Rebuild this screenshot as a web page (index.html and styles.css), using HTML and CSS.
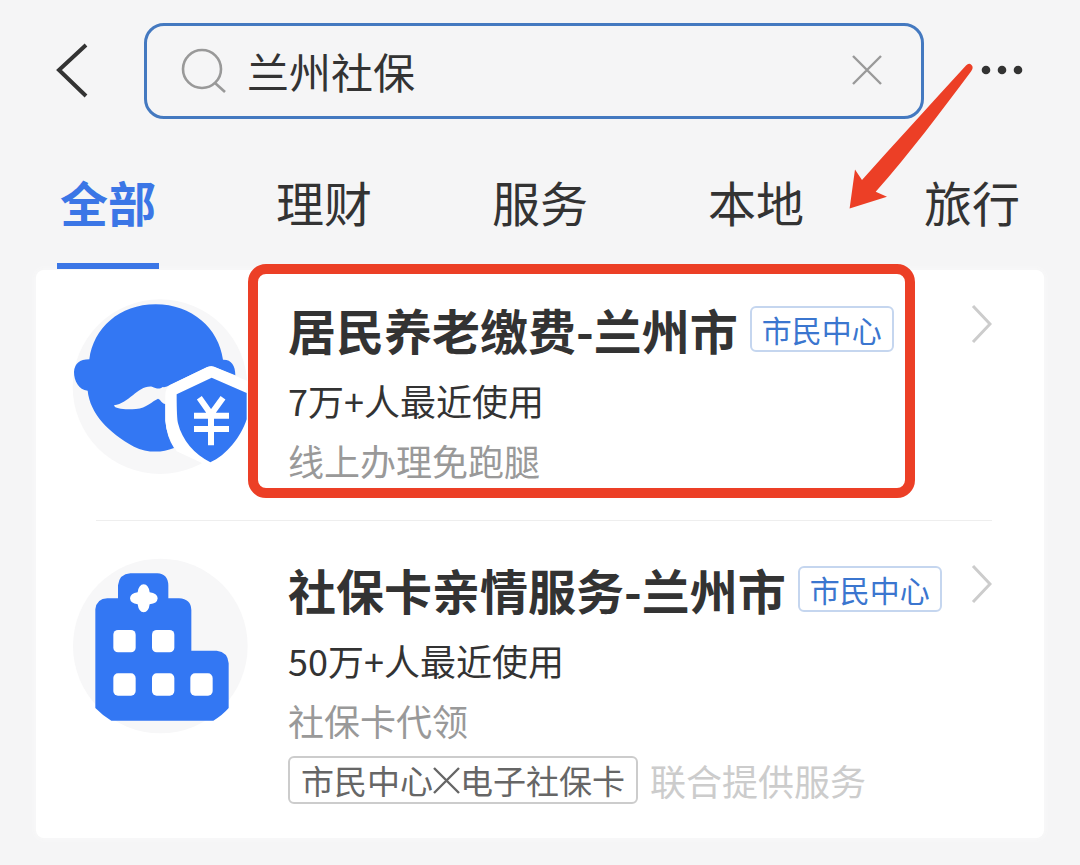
FILE: index.html
```html
<!DOCTYPE html>
<html lang="zh-CN">
<head>
<meta charset="utf-8">
<meta name="viewport" content="width=device-width, initial-scale=1">
<title>兰州社保</title>
<link rel="stylesheet" href="styles.css">
</head>
<body>
<header class="topbar">
  <button class="icon-btn back" type="button" aria-label="返回">
    <svg width="36" height="56" viewBox="0 0 36 56"><path d="M34 2 7 27 34 53" fill="none" stroke="#333" stroke-width="4"/></svg>
  </button>
  <form class="search" role="search">
    <svg class="search-icon" width="46" height="46" viewBox="0 0 46 46"><g fill="none" stroke="#999" stroke-width="2.6"><circle cx="21" cy="21" r="19"/><path d="M34 35l10 9"/></g></svg>
    <input class="search-input" type="text" value="兰州社保" aria-label="搜索">
    <button class="icon-btn" type="button" aria-label="清除">
      <svg width="32" height="32" viewBox="0 0 32 32"><path d="M2 1 30 29M30 1 2 29" stroke="#999" stroke-width="2.4"/></svg>
    </button>
  </form>
  <button class="icon-btn more" type="button" aria-label="更多">
    <svg width="44" height="12" viewBox="0 0 44 12"><g fill="#333"><circle cx="6" cy="5" r="4.3"/><circle cx="22" cy="5" r="4.3"/><circle cx="38" cy="5" r="4.3"/></g></svg>
  </button>
</header>

<nav class="tabs">
  <a class="tab tab-active" href="#all" aria-current="page">全部</a>
  <a class="tab" href="#finance">理财</a>
  <a class="tab" href="#service">服务</a>
  <a class="tab" href="#local">本地</a>
  <a class="tab" href="#travel">旅行</a>
</nav>

<main class="card">
  <a class="result" href="#pension">
    <svg class="logo" viewBox="126 114 528 528" aria-hidden="true">
      <circle cx="390" cy="380" r="262" fill="#f7f7f8"/>
      <path fill="#3377f3" d="M178 298C190 205 268 133 377 133S566 205 579 299C604 298 616 316 616 346L552 320Q543 317 532 321L420 375Q408 383 398 381C388 388 380 386 366 380C322 376 300 430 252 436C254 448 288 449 318 447C350 444 366 424 384 416C392 418 394 430 406 432V482Q410 530 432 564C392 580 350 578 312 560C235 518 180 460 173 392C146 390 132 362 132 336Q134 298 178 298Z"/>
      <path fill="#fff" d="M532 321 420 375Q406 384 406 405V482Q410 530 440 574L540 620 542 607 440 480V403L545 353 648 398 654 364 552 320Q543 317 532 321Z"/>
      <path fill="#3377f3" d="M545 353 650 399V478C634 530 588 587 541 607C494 584 456 540 444 490Q440 475 440 403Z"/>
      <path fill="none" stroke="#fff" stroke-width="18" d="M508 413 543 463 579 413M543 460V556M492 467H597M492 507H597"/>
    </svg>
    <div class="info">
      <div class="title-line"><h2 class="title">居民养老缴费-兰州市</h2><span class="badge">市民中心</span></div>
      <p class="usage">7万+人最近使用</p>
      <p class="desc">线上办理免跑腿</p>
      <span class="highlight"></span>
    </div>
    <svg class="chevron" width="22" height="40" viewBox="0 0 22 40"><path d="M3 2 20 20 3 38" fill="none" stroke="#ccc" stroke-width="3"/></svg>
  </a>
  <hr class="divider">
  <a class="result result-last" href="#family">
    <svg class="logo" viewBox="126 144 528 528" aria-hidden="true">
      <circle cx="391" cy="408" r="262" fill="#f7f7f8"/>
      <path fill="#3377f3" d="M301 190H382Q414 192 415 226V265H447Q483 267 484 300V422H560Q594 426 596 460V594Q578 615 550 632H244Q216 615 196 594V298Q200 266 232 265H264V226Q268 192 301 190Z"/>
      <g fill="#fff">
        <path d="M341 223Q356 224 359 247Q382 250 383 265Q382 281 359 283Q356 306 341 307Q326 306 323 283Q301 280 300 265Q301 250 323 247Q326 224 341 223Z"/>
        <rect x="250" y="360" width="67" height="67" rx="14"/>
        <rect x="366" y="360" width="67" height="67" rx="14"/>
        <rect x="250" y="490" width="67" height="67" rx="14"/>
        <rect x="366" y="490" width="67" height="67" rx="14"/>
        <rect x="481" y="490" width="67" height="67" rx="14"/>
      </g>
    </svg>
    <div class="info">
      <div class="title-line"><h2 class="title">社保卡亲情服务-兰州市</h2><span class="badge">市民中心</span></div>
      <p class="usage">50万+人最近使用</p>
      <p class="desc">社保卡代领</p>
      <div class="provider">
        <span class="provider-tag">市民中心<svg width="27" height="28" viewBox="0 0 27 28" role="img" aria-label="X"><path d="M1 2 26 27M26 2 1 27" stroke="#666" stroke-width="2.4"/></svg>电子社保卡</span>
        <span class="provider-note">联合提供服务</span>
      </div>
    </div>
    <svg class="chevron" width="22" height="40" viewBox="0 0 22 40"><path d="M3 2 20 20 3 38" fill="none" stroke="#ccc" stroke-width="3"/></svg>
  </a>
</main>

<svg class="arrow" width="130" height="150" viewBox="846 62 130 150" aria-hidden="true"><path fill="#ec3f26" d="M849.6 208.5 855 169.5 862 180C895 143 930 105 966 65.500Q969 62.500 971.500 65Q974 67.500 971 71.500C940 113 910 153 875.700 191.700L887 196.700Z"/></svg>
</body>
</html>
```
FILE: styles.css
```css
* {
  box-sizing: border-box;
}

body {
  position: relative;
  margin: 0;
  background: #f5f5f6;
  color: #333;
  font-family: "Noto Sans CJK SC", "Noto Sans", sans-serif;
}

svg {
  display: block;
  flex: none;
}

.topbar {
  display: flex;
  align-items: center;
  padding: 23px 56px 0 52px;
}

.icon-btn {
  flex: none;
  padding: 0;
  border: 0;
  background: none;
}

.search {
  display: flex;
  flex: 1;
  align-items: center;
  min-width: 0;
  height: 96px;
  margin: 0 56px;
  padding: 0 38px 0 34px;
  border: 3px solid #4479c0;
  border-radius: 20px;
}

.search-input {
  flex: 1;
  min-width: 0;
  height: 60px;
  margin: 0 20px;
  padding: 0;
  border: 0;
  outline: 0;
  background: none;
  color: #333;
  font: inherit;
  font-size: 42px;
  line-height: 60px;
}

.tabs {
  display: grid;
  grid-template-columns: repeat(5, 1fr);
  justify-items: center;
  margin-top: 50px;
}

.tab {
  height: 100px;
  padding: 0 3px;
  border-bottom: 6px solid transparent;
  color: #333;
  font-size: 48px;
  line-height: 64px;
  text-decoration: none;
}

.tab-active {
  border-color: #3b76e6;
  color: #3b76e6;
  font-weight: 700;
}

.card {
  margin: 1px 36px 27px;
  border-radius: 8px;
  background: #fff;
  box-shadow: 0 0 6px #fafafa;
}

.result {
  display: flex;
  align-items: flex-start;
  padding: 28px 52px 30px 36px;
  color: #333;
  text-decoration: none;
}

.result-last {
  padding: 37px 52px 34px 36px;
}

.logo {
  width: 176px;
  height: 176px;
  margin-right: 40px;
}

.info {
  position: relative;
  flex: 1;
  min-width: 0;
}

.title-line {
  display: flex;
  align-items: center;
  gap: 12px;
  height: 62px;
  margin-bottom: 10px;
  white-space: nowrap;
}

.title {
  margin: 0;
  font-size: 48px;
  font-weight: 700;
  line-height: 62px;
}

.badge {
  padding: 0 10px;
  border: 2px solid #c5d6ef;
  border-radius: 6px;
  color: #3b76cf;
  font-size: 30px;
  line-height: 42px;
}

.usage,
.desc {
  margin: 0;
  font-size: 36px;
  line-height: 60px;
}

.desc {
  color: #999;
}

.provider {
  display: flex;
  align-items: center;
  gap: 12px;
  margin-top: 6px;
  white-space: nowrap;
}

.provider-tag {
  display: flex;
  align-items: center;
  padding: 0 11px;
  border: 2px solid #ccc;
  border-radius: 6px;
  color: #666;
  font-size: 33px;
  line-height: 44px;
}

.provider-note {
  color: #ccc;
  font-size: 36px;
  line-height: 44px;
}

.divider {
  height: 1px;
  margin: 0 52px 0 60px;
  border: 0;
  background: #eee;
}

.chevron {
  margin: 6px 0 0 28px;
}

.highlight {
  position: absolute;
  inset: -34px 27px -8px -40px;
  border: 10px solid #ec3f26;
  border-radius: 18px;
}

.arrow {
  position: absolute;
  top: 62px;
  right: 104px;
}
```
